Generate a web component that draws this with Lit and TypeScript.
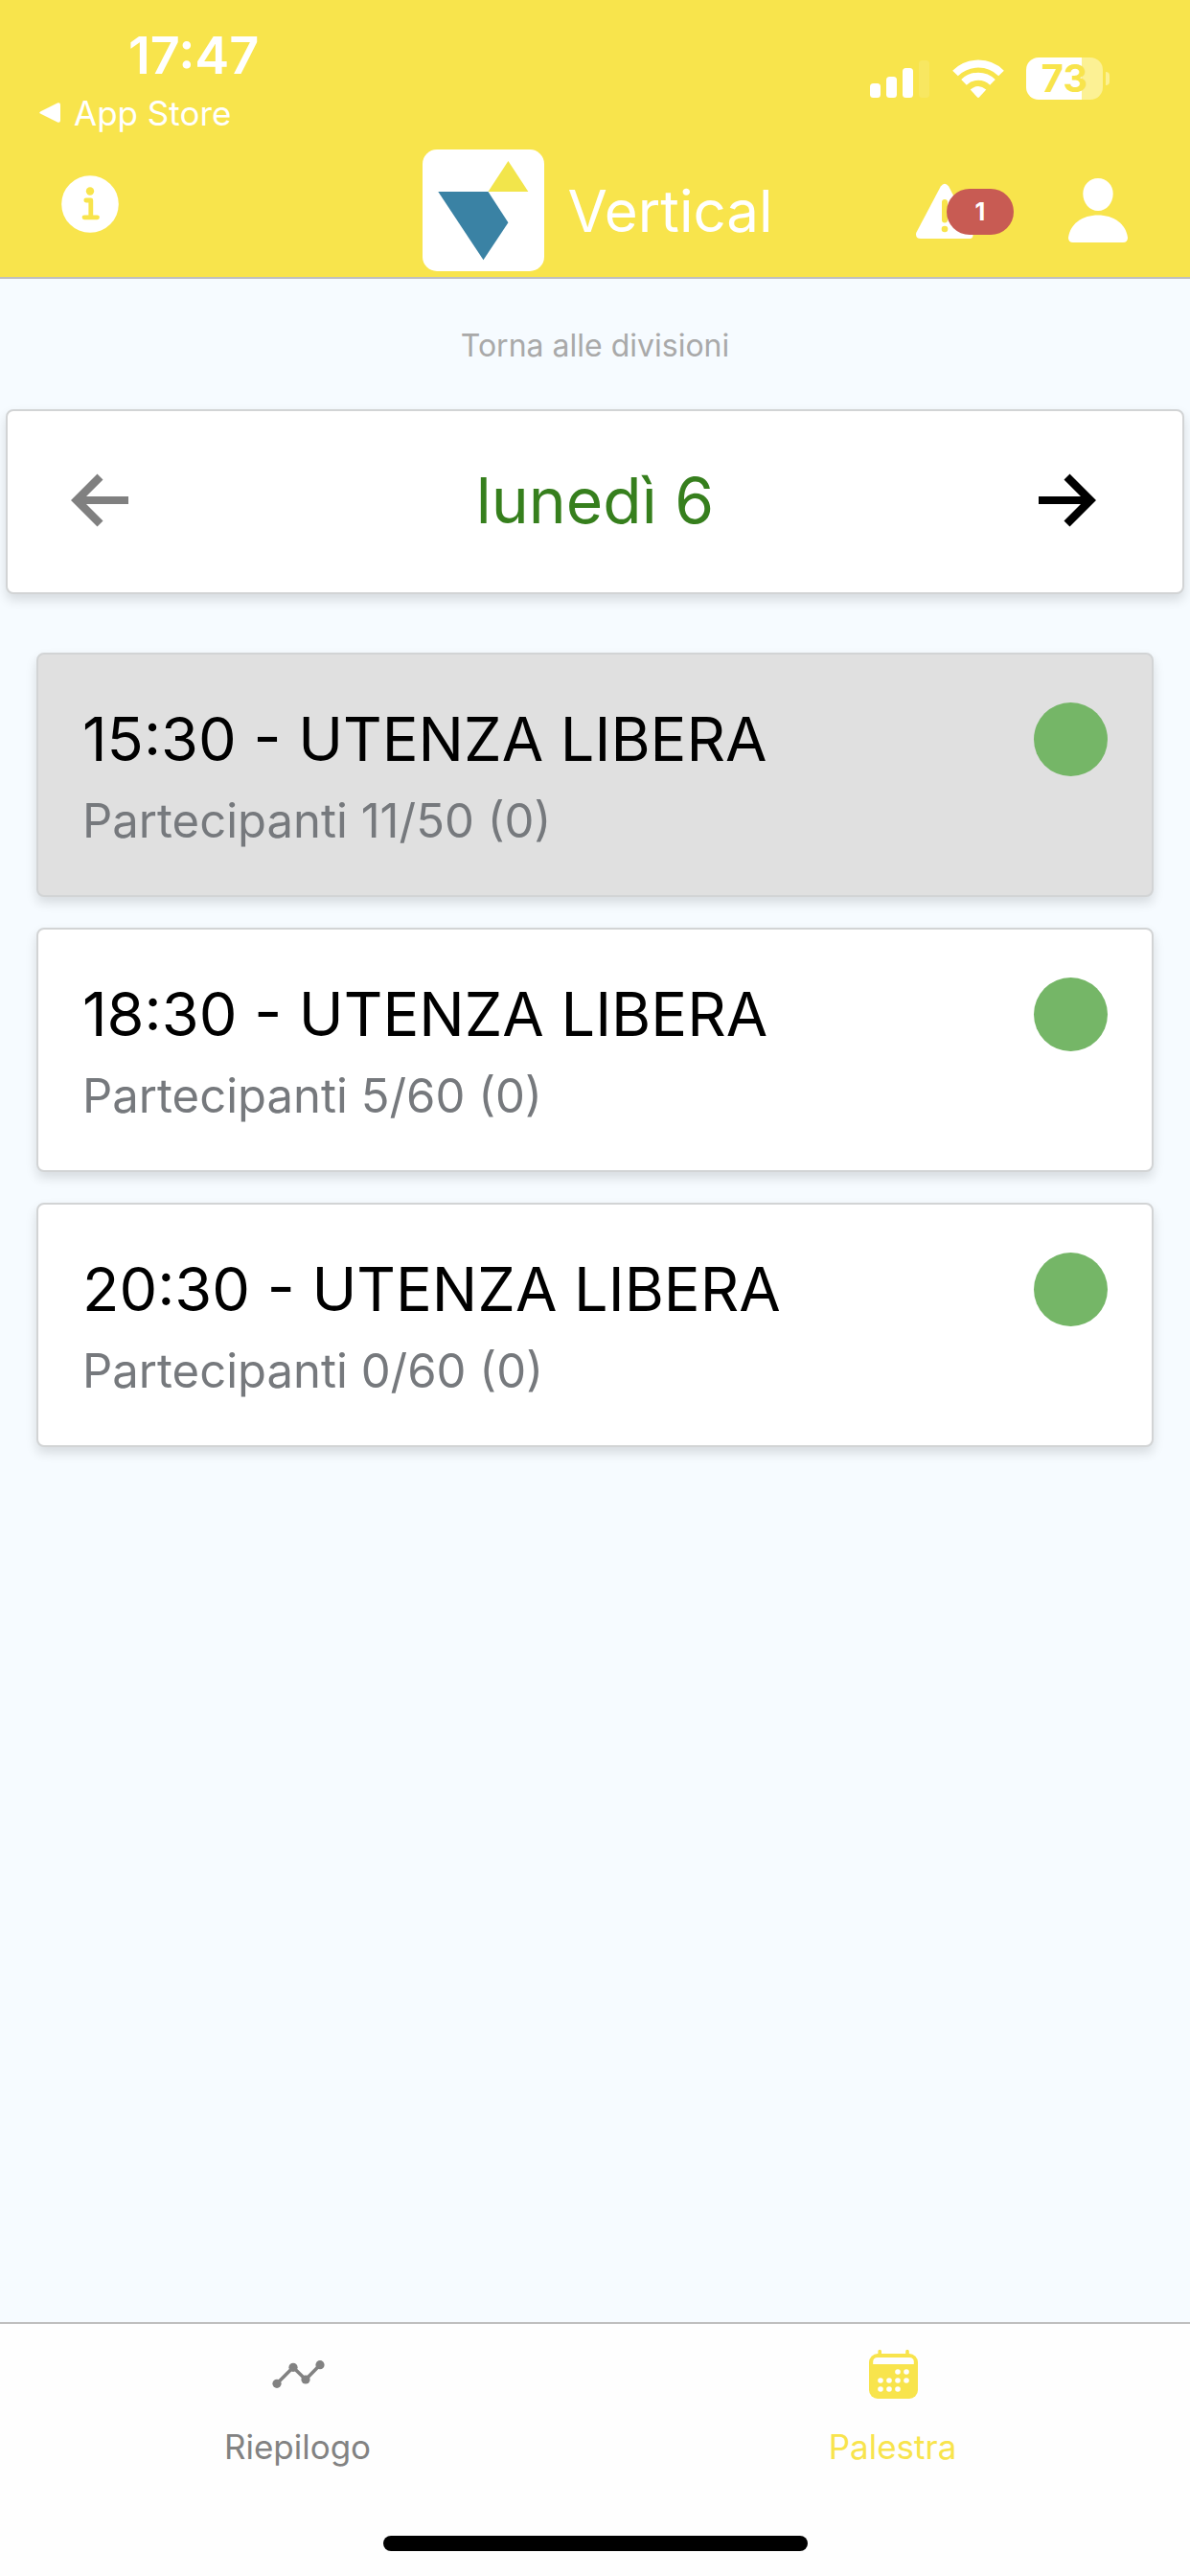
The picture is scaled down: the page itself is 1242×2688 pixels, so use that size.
import { LitElement, html, css, svg } from "lit";
import { customElement, property, state } from "lit/decorators.js";
import { classMap } from "lit/directives/class-map.js";

interface Slot {
  time: string;
  name: string;
  booked: number;
  capacity: number;
  waiting: number;
  past: boolean;
}

const SLOTS: Slot[] = [
  { time: "15:30", name: "UTENZA LIBERA", booked: 11, capacity: 50, waiting: 0, past: true },
  { time: "18:30", name: "UTENZA LIBERA", booked: 5, capacity: 60, waiting: 0, past: false },
  { time: "20:30", name: "UTENZA LIBERA", booked: 0, capacity: 60, waiting: 0, past: false },
];

const CALENDAR_DOTS: [number, number][] = [
  [35, 27], [44, 27],
  [17, 36], [26, 36], [35, 36], [44, 36],
  [17, 45], [26, 45], [35, 45],
];

const reset = css`
  * {
    box-sizing: border-box;
  }
  button,
  a {
    font: inherit;
    color: inherit;
    background: none;
    border: 0;
    padding: 0;
    margin: 0;
    text-decoration: none;
    cursor: pointer;
  }
  svg {
    display: block;
    flex: none;
  }
`;

@customElement("status-bar")
class StatusBar extends LitElement {
  static styles = [
    reset,
    css`
      :host {
        display: flex;
        justify-content: space-between;
        padding: 28px 84px 0 40px;
        color: #fff;
      }
      .clock {
        padding-left: 94px;
        font-size: 54px;
        line-height: 60px;
        font-weight: 600;
      }
      .back {
        display: flex;
        align-items: center;
        gap: 13px;
        font-size: 35px;
        line-height: 60px;
      }
      .icons {
        display: flex;
        align-items: center;
        gap: 23px;
        height: 44px;
        margin-top: 32px;
      }
      .battery {
        display: flex;
        align-items: center;
        gap: 3px;
      }
      .cell {
        width: 80px;
        border-radius: 13px;
        background: linear-gradient(90deg, #fff 73%, #fcf194 73%);
        color: #f8e44c;
        font-size: 40px;
        line-height: 44px;
        font-weight: 700;
        text-align: center;
      }
      .nub {
        width: 4px;
        height: 14px;
        border-radius: 0 4px 4px 0;
        background: #fcf194;
      }
    `,
  ];

  render() {
    return html`
      <div>
        <div class="clock">17:47</div>
        <a class="back" href="#store">
          <svg width="24" height="24" viewBox="0 0 24 24" aria-hidden="true">
            <path
              d="M2.5 10.2 20 1.6Q23 .6 23 3.6V19.400Q23 22.400 20 21.400L2.500 12.800Q0 11.500 2.500 10.200Z"
              fill="#fff"
            />
          </svg>
          <span>App Store</span>
        </a>
      </div>
      <div class="icons">
        <svg width="63" height="42" viewBox="0 0 63 42" fill="#fff" aria-hidden="true">
          <rect x="0" y="26" width="11" height="15" rx="3.500" />
          <rect x="17" y="19" width="11" height="22" rx="3.500" />
          <rect x="34" y="10" width="11" height="31" rx="3.500" />
          <rect x="51" y="2" width="11" height="39" rx="3.500" opacity=".12" />
        </svg>
        <svg width="54" height="42" viewBox="0 0 54 42" aria-hidden="true">
          <g fill="none" stroke="#fff" stroke-width="8">
            <path d="M3 15.500A34 34 0 0 1 51 15.500" />
            <path d="M12 24.800A21.500 21.500 0 0 1 42 24.800" />
          </g>
          <path d="M18.700 32.600Q27 25.500 35.300 32.600L28.200 40.300Q27 41.500 25.800 40.300Z" fill="#fff" />
        </svg>
        <div class="battery">
          <div class="cell">73</div>
          <div class="nub"></div>
        </div>
      </div>
    `;
  }
}

@customElement("app-navbar")
class AppNavbar extends LitElement {
  @property({ type: Number }) alerts = 0;

  static styles = [
    reset,
    css`
      :host {
        display: grid;
        grid-template-columns: 1fr auto 1fr;
        align-items: center;
        padding: 8px 64px 6px;
        border-bottom: 2px solid #bfbfbf;
        color: #fff;
      }
      .info {
        justify-self: start;
        padding-bottom: 14px;
      }
      .brand {
        display: flex;
        align-items: center;
        gap: 24px;
        margin: 0;
        padding-left: 6px;
        font-size: 60px;
        line-height: 72px;
        font-weight: 400;
      }
      .logo {
        width: 127px;
        height: 127px;
        border-radius: 15px;
        background: #fff;
      }
      .actions {
        display: flex;
        align-items: center;
        justify-self: end;
        gap: 56px;
      }
      .alerts {
        position: relative;
        width: 103px;
      }
      .badge {
        position: absolute;
        right: 0;
        top: 7px;
        width: 70px;
        border-radius: 24px;
        background: #c85b53;
        font-size: 25px;
        line-height: 48px;
        font-weight: 700;
        text-align: center;
      }
    `,
  ];

  render() {
    return html`
      <button class="info" aria-label="Informazioni">
        <svg width="60" height="60" viewBox="0 0 60 60">
          <circle cx="30" cy="30" r="29.800" fill="#fff" />
          <circle cx="30" cy="16.500" r="4.200" fill="#f8e44c" />
          <path
            d="M25.800 26H30.800V43.800M24 43.800H37.500"
            fill="none"
            stroke="#f8e44c"
            stroke-width="4.800"
            stroke-linecap="round"
            stroke-linejoin="round"
          />
        </svg>
      </button>
      <h1 class="brand">
        <svg class="logo" viewBox="0 0 382 382" aria-hidden="true">
          <path d="M49 132H206L269 229 191 347Z" fill="#3a82a4" />
          <path d="M269 36 332 132H206Z" fill="#f2e54b" />
        </svg>
        <span>Vertical</span>
      </h1>
      <div class="actions">
        <button class="alerts" aria-label="Avvisi">
          <svg width="62" height="60" viewBox="0 0 62 60">
            <path
              d="M26.800 4.500Q31 -1 35.200 4.500L60 53Q62 59 56 59H6Q0 59 1.200 53Z"
              fill="#fff"
            />
            <path d="M31 21V39.500" stroke="#f8e44c" stroke-width="6" stroke-linecap="round" />
            <circle cx="31" cy="49" r="3.300" fill="#f8e44c" />
          </svg>
          <span class="badge">${this.alerts}</span>
        </button>
        <button aria-label="Profilo">
          <svg width="64" height="68" viewBox="0 0 64 68" fill="#fff">
            <path d="M32 0C41 0 47.700 7 47.700 16C47.700 26 41 34 32 34S16.300 26 16.300 16C16.300 7 23 0 32 0Z" />
            <path d="M1 62C3 47 16 38.500 32 38.500S61 47 63 62Q63 67 58 67H6Q1 67 1 62Z" />
          </svg>
        </button>
      </div>
    `;
  }
}

@customElement("day-picker")
class DayPicker extends LitElement {
  @property() day = "";

  static styles = [
    reset,
    css`
      :host {
        display: grid;
        grid-template-columns: 1fr auto 1fr;
        align-items: center;
        margin: 0 6px;
        padding: 55px 64px 57px;
        border: 2px solid #d2d4d5;
        border-radius: 8px;
        background: #fff;
        box-shadow: 0 6px 12px rgba(0, 0, 0, 0.13);
      }
      .day {
        margin: 0;
        color: #367f1d;
        font-size: 66px;
        line-height: 77px;
        font-weight: 400;
      }
      .previous {
        justify-self: start;
        color: #808080;
      }
      .next {
        justify-self: end;
        padding-right: 24px;
        color: #000;
      }
    `,
  ];

  render() {
    return html`
      <button class="previous" aria-label="Giorno precedente">
        <svg width="64" height="58" viewBox="0 0 64 58">
          <path d="M2 28 29.500 .5 35.500 6.500 18 24H62V32H18L35.500 49.500 29.500 55.500Z" fill="currentColor" />
        </svg>
      </button>
      <h2 class="day">${this.day}</h2>
      <button class="next" aria-label="Giorno successivo">
        <svg width="64" height="58" viewBox="0 0 64 58">
          <path d="M62 28 34.500 .5 28.500 6.500 46 24H2V32H46L28.500 49.500 34.500 55.500Z" fill="currentColor" />
        </svg>
      </button>
    `;
  }
}

@customElement("slot-card")
class SlotCard extends LitElement {
  @property({ attribute: false }) slotData!: Slot;

  static styles = [
    reset,
    css`
      :host {
        display: block;
      }
      .card {
        display: block;
        padding: 48px 46px 47px;
        border: 2px solid #d2d4d5;
        border-radius: 8px;
        background: #fff;
        box-shadow: 0 6px 12px rgba(0, 0, 0, 0.13);
      }
      .past {
        background: #e0e0e0;
      }
      .heading {
        display: flex;
        align-items: center;
        justify-content: space-between;
        margin-bottom: 16px;
      }
      .title {
        margin: 0;
        color: #000;
        font-size: 63px;
        line-height: 80px;
        font-weight: 400;
      }
      .dot {
        width: 77px;
        height: 77px;
        border-radius: 50%;
        background: #75b667;
      }
      .people {
        margin: 0;
        color: #76797d;
        font-size: 49px;
        line-height: 60px;
      }
    `,
  ];

  render() {
    const s = this.slotData;
    return html`
      <a class=${classMap({ card: true, past: s.past })} href="#slot">
        <div class="heading">
          <h3 class="title">${s.time} - ${s.name}</h3>
          <span class="dot"></span>
        </div>
        <p class="people">Partecipanti ${s.booked}/${s.capacity} (${s.waiting})</p>
      </a>
    `;
  }
}

@customElement("tab-bar")
class TabBar extends LitElement {
  @state() private active = "palestra";

  static styles = [
    reset,
    css`
      :host {
        display: block;
        padding: 23px 0 26px;
        border-top: 2px solid #bfbfbf;
        background: #fefefe;
      }
      .tabs {
        display: grid;
        grid-template-columns: 1fr 1fr;
      }
      .tab {
        display: flex;
        flex-direction: column;
        align-items: center;
        gap: 22px;
        color: #828282;
        font-size: 35px;
        line-height: 46px;
      }
      .active {
        color: #f8e44c;
      }
      .home {
        width: 443px;
        height: 16px;
        margin: 70px auto 0;
        border-radius: 8px;
        background: #000;
      }
    `,
  ];

  private tab(id: string, label: string, icon: unknown) {
    return html`
      <button
        class=${classMap({ tab: true, active: this.active === id })}
        @click=${() => (this.active = id)}
      >
        <svg width="60" height="60" viewBox="0 0 60 60" fill="currentColor" aria-hidden="true">${icon}</svg>
        <span>${label}</span>
      </button>
    `;
  }

  render() {
    return html`
      <nav class="tabs">
        ${this.tab(
          "riepilogo",
          "Riepilogo",
          svg`
            <path d="M8 39.300 25 22.300 38 35 53 19.700" fill="none" stroke="currentColor" stroke-width="3.600" />
            <circle cx="8" cy="39.300" r="4.600" />
            <circle cx="25" cy="22.300" r="4.600" />
            <circle cx="38" cy="35" r="4.600" />
            <circle cx="53" cy="19.700" r="4.600" />
          `
        )}
        ${this.tab(
          "palestra",
          "Palestra",
          svg`
            <rect x="5" y="8" width="51" height="47" rx="9" />
            <path d="M16.200 9V5.500M45 9V5.500" stroke="currentColor" stroke-width="3.600" stroke-linecap="round" />
            <path d="M9.200 19V16.500Q9.200 12 14 12H47Q51.800 12 51.800 16.500V19Z" fill="#fefefe" />
            ${CALENDAR_DOTS.map(([x, y]) => svg`<circle cx=${x} cy=${y} r="2.800" fill="#fefefe" />`)}
          `
        )}
      </nav>
      <div class="home"></div>
    `;
  }
}

@customElement("app-root")
class AppRoot extends LitElement {
  static styles = [
    reset,
    css`
      :host {
        display: flex;
        flex-direction: column;
        min-height: 100vh;
        background: #f6fbff;
        font-family: Inter, "Liberation Sans", sans-serif;
      }
      .top {
        background: #f8e44c;
      }
      .content {
        flex: 1;
      }
      .divisions {
        display: block;
        width: fit-content;
        margin: 46px auto 42px;
        color: #a9a9a9;
        font-size: 32px;
        line-height: 48px;
      }
      .list {
        display: flex;
        flex-direction: column;
        gap: 32px;
        padding: 61px 38px;
      }
    `,
  ];

  render() {
    return html`
      <header class="top">
        <status-bar></status-bar>
        <app-navbar .alerts=${1}></app-navbar>
      </header>
      <main class="content">
        <a class="divisions" href="#divisioni">Torna alle divisioni</a>
        <day-picker day="lunedì 6"></day-picker>
        <section class="list">
          ${SLOTS.map((s) => html`<slot-card .slotData=${s}></slot-card>`)}
        </section>
      </main>
      <tab-bar></tab-bar>
    `;
  }
}
